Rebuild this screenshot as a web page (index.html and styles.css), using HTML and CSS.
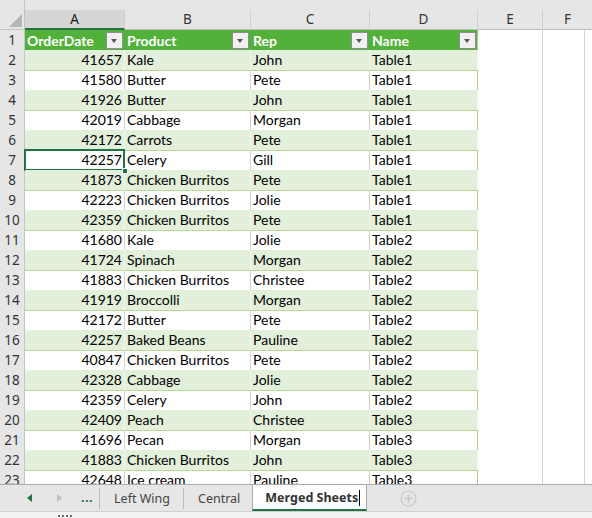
FILE: index.html
```html
<!DOCTYPE html>
<html>
<head>
<meta charset="utf-8">
<link rel="stylesheet" href="styles.css">
</head>
<body>
<div class="app">
  <div class="sheet">
    <div class="colhead">
      <div class="corner"><span class="tri"></span></div>
      <div class="ch sel">A</div>
      <div class="ch">B</div>
      <div class="ch">C</div>
      <div class="ch">D</div>
      <div class="ch">E</div>
      <div class="ch last">F</div>
    </div>
    <div class="row thead">
      <div class="rh">1</div>
      <div class="c h">OrderDate<span class="fb"></span></div>
      <div class="c h">Product<span class="fb"></span></div>
      <div class="c h">Rep<span class="fb"></span></div>
      <div class="c h dl">Name<span class="fb"></span></div>
      <div class="c x"></div><div class="c x last"></div>
    </div>
    <div class="row g"><div class="rh">2</div><div class="c n">41657</div><div class="c">Kale</div><div class="c">John</div><div class="c dl">Table1</div><div class="c x"></div><div class="c x last"></div></div>
    <div class="row"><div class="rh">3</div><div class="c n">41580</div><div class="c">Butter</div><div class="c">Pete</div><div class="c dl">Table1</div><div class="c x"></div><div class="c x last"></div></div>
    <div class="row g"><div class="rh">4</div><div class="c n">41926</div><div class="c">Butter</div><div class="c">John</div><div class="c dl">Table1</div><div class="c x"></div><div class="c x last"></div></div>
    <div class="row"><div class="rh">5</div><div class="c n">42019</div><div class="c">Cabbage</div><div class="c">Morgan</div><div class="c dl">Table1</div><div class="c x"></div><div class="c x last"></div></div>
    <div class="row g"><div class="rh">6</div><div class="c n">42172</div><div class="c">Carrots</div><div class="c">Pete</div><div class="c dl">Table1</div><div class="c x"></div><div class="c x last"></div></div>
    <div class="row"><div class="rh">7</div><div class="c n active">42257<span class="handle"></span></div><div class="c">Celery</div><div class="c">Gill</div><div class="c dl">Table1</div><div class="c x"></div><div class="c x last"></div></div>
    <div class="row g"><div class="rh">8</div><div class="c n">41873</div><div class="c">Chicken Burritos</div><div class="c">Pete</div><div class="c dl">Table1</div><div class="c x"></div><div class="c x last"></div></div>
    <div class="row"><div class="rh">9</div><div class="c n">42223</div><div class="c">Chicken Burritos</div><div class="c">Jolie</div><div class="c dl">Table1</div><div class="c x"></div><div class="c x last"></div></div>
    <div class="row g"><div class="rh">10</div><div class="c n">42359</div><div class="c">Chicken Burritos</div><div class="c">Pete</div><div class="c dl">Table1</div><div class="c x"></div><div class="c x last"></div></div>
    <div class="row"><div class="rh">11</div><div class="c n">41680</div><div class="c">Kale</div><div class="c">Jolie</div><div class="c dl">Table2</div><div class="c x"></div><div class="c x last"></div></div>
    <div class="row g"><div class="rh">12</div><div class="c n">41724</div><div class="c">Spinach</div><div class="c">Morgan</div><div class="c dl">Table2</div><div class="c x"></div><div class="c x last"></div></div>
    <div class="row"><div class="rh">13</div><div class="c n">41883</div><div class="c">Chicken Burritos</div><div class="c">Christee</div><div class="c dl">Table2</div><div class="c x"></div><div class="c x last"></div></div>
    <div class="row g"><div class="rh">14</div><div class="c n">41919</div><div class="c">Broccolli</div><div class="c">Morgan</div><div class="c dl">Table2</div><div class="c x"></div><div class="c x last"></div></div>
    <div class="row"><div class="rh">15</div><div class="c n">42172</div><div class="c">Butter</div><div class="c">Pete</div><div class="c dl">Table2</div><div class="c x"></div><div class="c x last"></div></div>
    <div class="row g"><div class="rh">16</div><div class="c n">42257</div><div class="c">Baked Beans</div><div class="c">Pauline</div><div class="c dl">Table2</div><div class="c x"></div><div class="c x last"></div></div>
    <div class="row"><div class="rh">17</div><div class="c n">40847</div><div class="c">Chicken Burritos</div><div class="c">Pete</div><div class="c dl">Table2</div><div class="c x"></div><div class="c x last"></div></div>
    <div class="row g"><div class="rh">18</div><div class="c n">42328</div><div class="c">Cabbage</div><div class="c">Jolie</div><div class="c dl">Table2</div><div class="c x"></div><div class="c x last"></div></div>
    <div class="row"><div class="rh">19</div><div class="c n">42359</div><div class="c">Celery</div><div class="c">John</div><div class="c dl">Table2</div><div class="c x"></div><div class="c x last"></div></div>
    <div class="row g"><div class="rh">20</div><div class="c n">42409</div><div class="c">Peach</div><div class="c">Christee</div><div class="c dl">Table3</div><div class="c x"></div><div class="c x last"></div></div>
    <div class="row"><div class="rh">21</div><div class="c n">41696</div><div class="c">Pecan</div><div class="c">Morgan</div><div class="c dl">Table3</div><div class="c x"></div><div class="c x last"></div></div>
    <div class="row g"><div class="rh">22</div><div class="c n">41883</div><div class="c">Chicken Burritos</div><div class="c">John</div><div class="c dl">Table3</div><div class="c x"></div><div class="c x last"></div></div>
    <div class="row"><div class="rh">23</div><div class="c n">42648</div><div class="c">Ice cream</div><div class="c">Pauline</div><div class="c dl">Table3</div><div class="c x"></div><div class="c x last"></div></div>
  </div>
  <div class="tabbar">
    <span class="nav left"></span>
    <span class="nav right"></span>
    <span class="more">...</span>
    <span class="sep"></span>
    <span class="tab">Left Wing</span>
    <span class="sep"></span>
    <span class="tab">Central</span>
    <span class="tab activetab">Merged Sheets<span class="caret"></span></span>
    <span class="add"><svg width="17" height="17" viewBox="0 0 17 17"><circle cx="8.5" cy="8.5" r="7.5" fill="none" stroke="#c8c8c8" stroke-width="1.2"/><path d="M8.5 4.5v8M4.5 8.5h8" stroke="#c8c8c8" stroke-width="1.6"/></svg></span>
  </div>
  <div class="status"><span class="sicon"></span></div>
</div>
</body>
</html>
```
FILE: styles.css
```css
* { box-sizing: border-box; }
html, body { margin: 0; padding: 0; }
body { width: 592px; height: 518px; overflow: hidden; background: #fff; }
.app { display: flex; flex-direction: column; height: 518px; }
.sheet { height: 484px; overflow: hidden; flex: none; }
.colhead, .row {
  display: grid;
  grid-template-columns: 25px 100px 126px 119px 108px 65px 1fr;
}
.colhead { height: 30px; background: #e6e6e6; }
.corner { position: relative; border-right: 1px solid #c4c4c4; border-bottom: 1px solid #c4c4c4; }
.tri { position: absolute; right: 2px; bottom: 2px; width: 0; height: 0;
  border-left: 13px solid transparent; border-bottom: 13px solid #b5b5b5; }
.ch {
  margin-top: 10px; height: 20px;
  border-right: 1px solid #d0d0d0; border-bottom: 1px solid #bdbdbd;
  font: 13.5px "Noto Sans", sans-serif; color: #333; text-align: center; line-height: 19px;
}
.ch.sel { border-bottom: 2px solid #217346; background: #d6d6d6; color: #1a1a1a; }
.ch.last { border-right: none; }
.row { height: 20px; }
.rh {
  background: #e6e6e6; border-right: 1px solid #c4c4c4; border-bottom: 1px solid #d2d2d2;
  font: 13.5px "Noto Sans", sans-serif; color: #333; text-align: center; line-height: 20px;
}
.c {
  position: relative;
  font: 14px "Lato", sans-serif; color: #000; line-height: 20px;
  padding: 0 2px; white-space: nowrap; overflow: visible;
  border-right: 1px solid #d4d4d4; border-bottom: 1px solid #b4d99c;
}
.row.g .c { background: #e2efda; border-right-color: #f2f7ee; }
.row.g .c.x, .row .c.x { background: #fff; border-right-color: #d4d4d4; border-bottom-color: #d4d4d4; }
.c.x.last { border-right: 1px solid #d4d4d4; margin-right: 7px; }
.c.n { text-align: right; }
.c.dl { border-right: 1px solid #a9d08e; }
.thead .c.h {
  background: #52b13a; color: #fff; font-weight: bold; border-right-color: #52b13a;
  border-bottom-color: #52b13a; display: flex; align-items: center; padding-right: 1px;
  padding-top: 1px;
}
.thead .c.h.dl { border-right-color: #a9d08e; }
.fb {
  margin-left: auto; width: 17px; height: 17px; margin-top: -1px;
  background: #f0f0f0; border: 1px solid #8e8e8e; position: relative;
}
.fb::after {
  content: ""; position: absolute; left: 4px; top: 6px; width: 0; height: 0;
  border-left: 3.5px solid transparent; border-right: 3.5px solid transparent; border-top: 4px solid #555;
}
.c.active::before {
  content: ""; position: absolute; left: -1px; top: -1px; right: -1px; bottom: -1px;
  border: 2px solid #217346; pointer-events: none;
}
.handle {
  position: absolute; right: -4px; bottom: -4px; width: 6px; height: 6px;
  background: #217346; border: 1px solid #fff; z-index: 2;
}
.tabbar {
  height: 28px; flex: none; background: #e6e6e6;
  border-top: 1px solid #ababab; border-bottom: 1px solid #cfcfcf;
  display: flex; align-items: center;
  font: 12.5px "Noto Sans", sans-serif; color: #444;
}
.nav { width: 0; height: 0; border-top: 4px solid transparent; border-bottom: 4px solid transparent; }
.nav.left { margin-left: 27px; border-right: 5px solid #217346; }
.nav.right { margin-left: 25px; border-left: 5px solid #c0c0c0; }
.more { margin-left: 19px; color: #217346; font-weight: bold; letter-spacing: 0.5px; margin-top: -2px; }
.sep { width: 1px; height: 21px; background: #bcbcbc; margin-left: 6px; }
.tab { margin-left: 14px; }
.tab + .sep { margin-left: 13px; }
.activetab {
  margin-left: 12px; align-self: stretch; width: 115px;
  background: #fff; border-left: 1px solid #ababab; border-right: 1px solid #ababab;
  border-bottom: 2px solid #217346; font-weight: bold; color: #333;
  display: flex; align-items: center; padding-left: 12px; padding-top: 1px;
}
.caret { width: 1px; height: 16px; background: #000; margin-left: 1px; }
.add { margin-left: 33px; display: flex; }
.status { flex: 1; background: #f3f3f3; position: relative; }
.sicon { position: absolute; left: 58px; top: 3px; width: 14px; height: 3px; border-top: 2px dotted #666; }
```
